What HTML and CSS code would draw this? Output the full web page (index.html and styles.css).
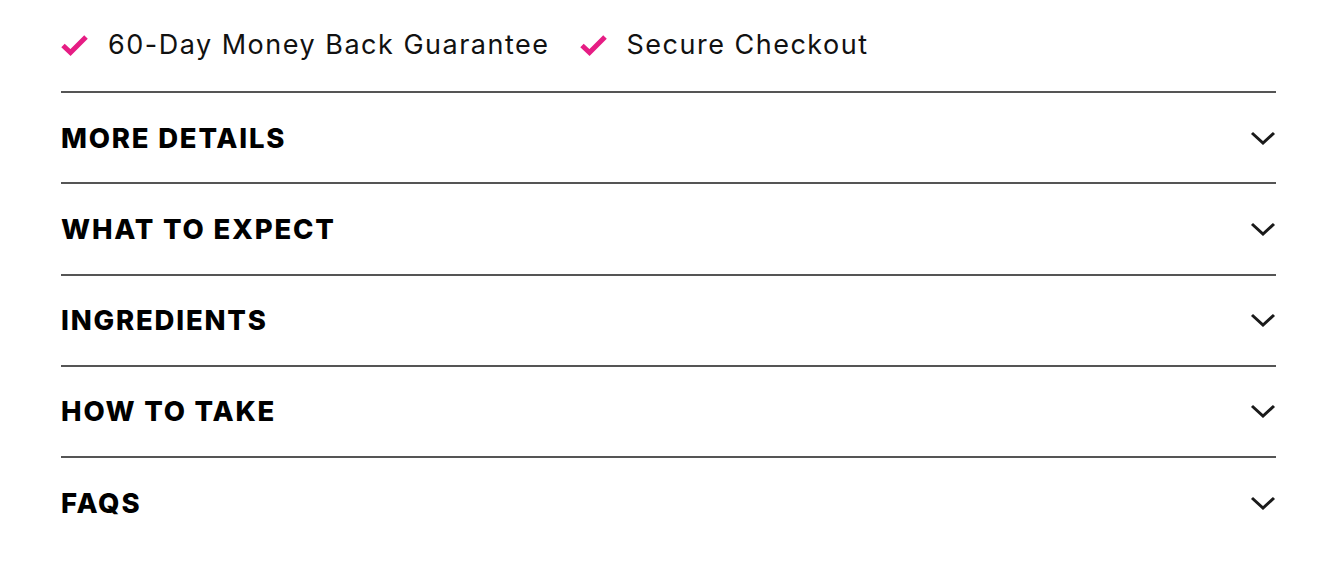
FILE: index.html
```html
<!DOCTYPE html>
<html lang="en">
<head>
<meta charset="utf-8">
<title>Product details</title>
<link rel="stylesheet" href="styles.css">
</head>
<body>
<div class="wrap">
  <ul class="badges">
    <li class="badge">
      <svg class="check" viewBox="0 0 28 24" width="28" height="24"><path d="M2 12.5 L9.5 19.5 L25 4" fill="none" stroke="#e61d84" stroke-width="5"/></svg>
      <span>60-Day Money Back Guarantee</span>
    </li>
    <li class="badge">
      <svg class="check" viewBox="0 0 28 24" width="28" height="24"><path d="M2 12.5 L9.5 19.5 L25 4" fill="none" stroke="#e61d84" stroke-width="5"/></svg>
      <span>Secure Checkout</span>
    </li>
  </ul>
  <div class="accordion">
    <div class="item"><span class="title">MORE DETAILS</span><svg class="chev" viewBox="0 0 26 14" width="26" height="14"><path d="M2 2 L13 12 L24 2" fill="none" stroke="#1a1a1a" stroke-width="3"/></svg></div>
    <div class="item"><span class="title">WHAT TO EXPECT</span><svg class="chev" viewBox="0 0 26 14" width="26" height="14"><path d="M2 2 L13 12 L24 2" fill="none" stroke="#1a1a1a" stroke-width="3"/></svg></div>
    <div class="item"><span class="title">INGREDIENTS</span><svg class="chev" viewBox="0 0 26 14" width="26" height="14"><path d="M2 2 L13 12 L24 2" fill="none" stroke="#1a1a1a" stroke-width="3"/></svg></div>
    <div class="item"><span class="title">HOW TO TAKE</span><svg class="chev" viewBox="0 0 26 14" width="26" height="14"><path d="M2 2 L13 12 L24 2" fill="none" stroke="#1a1a1a" stroke-width="3"/></svg></div>
    <div class="item last"><span class="title">FAQS</span><svg class="chev" viewBox="0 0 26 14" width="26" height="14"><path d="M2 2 L13 12 L24 2" fill="none" stroke="#1a1a1a" stroke-width="3"/></svg></div>
  </div>
</div>
</body>
</html>
```
FILE: styles.css
```css
html, body {
  margin: 0;
  padding: 0;
  background: #fff;
}
body {
  font-family: Inter, Lato, sans-serif;
  color: #111;
}
.wrap {
  width: 1215px;
  margin-left: 61px;
}
.badges {
  list-style: none;
  margin: 0;
  padding: 0;
  height: 91px;
  display: flex;
  align-items: center;
  gap: 30px;
}
.badge {
  display: flex;
  align-items: center;
  gap: 19px;
  font-size: 27px;
  letter-spacing: 1.5px;
  color: #111;
  margin-top: -2px;
}
.check {
  display: block;
}
.accordion {
  display: flex;
  flex-direction: column;
}
.item {
  border-top: 2px solid #555;
  height: 89.25px;
  display: flex;
  align-items: center;
  justify-content: space-between;
}
.title {
  font-size: 27.5px;
  font-weight: 800;
  letter-spacing: 1.8px;
  color: #000;
}
.chev {
  display: block;
}
```
